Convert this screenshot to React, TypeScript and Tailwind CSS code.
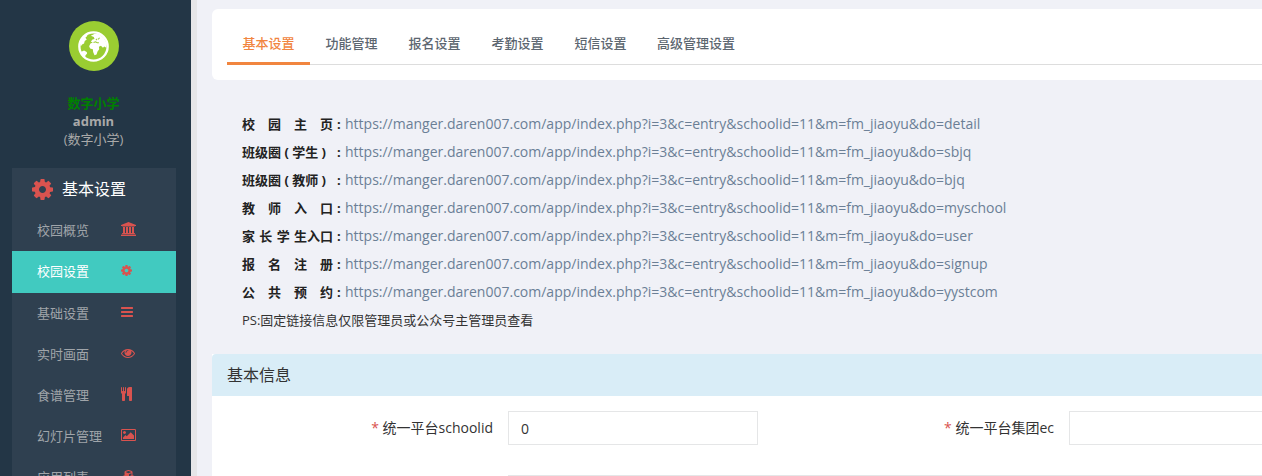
import React from "react";
import { FaCubes } from "react-icons/fa";

type GlyphProps = { box: string; d: string; className: string };

function Glyph({ box, d, className }: GlyphProps) {
  return (
    <svg viewBox={box} className={className} fill="currentColor" aria-hidden="true">
      <path d={d} />
    </svg>
  );
}

function Globe() {
  return (
    <svg viewBox="0 0 92 92" className="size-[31px]" aria-hidden="true">
      <circle cx="46" cy="46" r="42" fill="none" stroke="currentColor" strokeWidth="7" />
      <g fill="currentColor">
        <path d="M6 34 L12 20 L24 10 L28 14 L22 20 L26 25 L20 30 L18 37 L12 40 L8 46 Z" />
        <path d="M8 62 L18 58 L26 62 L27 67 L22 73 L21 80 L12 72 Z" />
        <path d="M38 14 L50 8 L64 10 L78 22 L86 38 L84 50 L78 46 L74 50 L68 44 L62 47 L63 54 L58 61 L55 70 L49 72 L45 62 L44 54 L36 52 L33 45 L37 37 L44 34 L38 31 L43 25 L49 24 L47 18 Z" />
      </g>
      <path
        d="M46 34 L52 32 L57 35 L62 35 M60 25 L64 20 M53 27 L57 23"
        fill="none"
        stroke="#9acd32"
        strokeWidth="3"
      />
    </svg>
  );
}

const COG =
  "M1152 896q0-106-75-181t-181-75-181 75-75 181 75 181 181 75 181-75 75-181zm512-109v222q0 12-8 23t-20 13l-185 28q-19 54-39 91 35 50 107 138 10 12 10 25t-9 23q-27 37-99 108t-94 71q-12 0-26-9l-138-108q-44 23-91 38-16 136-29 186-7 28-36 28h-222q-14 0-24.5-8.5t-11.5-21.5l-28-184q-49-16-90-37l-141 107q-10 9-25 9-14 0-25-11-126-114-165-168-7-10-7-23 0-12 8-23 15-21 51-66.5t54-70.5q-27-50-41-99l-183-27q-13-2-21-12.5t-8-23.5v-222q0-12 8-23t19-13l186-28q14-46 39-92-40-57-107-138-10-12-10-24 0-10 9-23 26-36 98.5-107.5t94.5-71.5q13 0 26 10l138 107q44-23 91-38 16-136 29-186 7-28 36-28h222q14 0 24.5 8.5t11.5 21.5l28 184q49 16 90 37l142-107q9-9 24-9 13 0 25 10 129 119 165 170 7 8 7 22 0 12-8 23-15 21-51 66.5t-54 70.5q26 50 41 98l183 28q13 2 21 12.5t8 23.5z";
const BANK =
  "M960 0l960 384v128h-128q0 26-20.5 45t-48.5 19h-1526q-28 0-48.5-19t-20.5-45h-128v-128zm-704 640h256v768h128v-768h256v768h128v-768h256v768h128v-768h256v768h59q28 0 48.5 19t20.5 45v64h-1664v-64q0-26 20.5-45t48.5-19h59v-768zm1595 960q28 0 48.5 19t20.5 45v128h-1920v-128q0-26 20.5-45t48.5-19h1782z";
const BARS =
  "M1536 1344v128q0 26-19 45t-45 19h-1408q-26 0-45-19t-19-45v-128q0-26 19-45t45-19h1408q26 0 45 19t19 45zm0-512v128q0 26-19 45t-45 19h-1408q-26 0-45-19t-19-45v-128q0-26 19-45t45-19h1408q26 0 45 19t19 45zm0-512v128q0 26-19 45t-45 19h-1408q-26 0-45-19t-19-45v-128q0-26 19-45t45-19h1408q26 0 45 19t19 45z";
const EYE =
  "M1664 960q-152-236-381-353 61 104 61 225 0 185-131.5 316.5t-316.5 131.5-316.5-131.5-131.5-316.5q0-121 61-225-229 117-381 353 133 205 333.5 326.5t434.5 121.5 434.5-121.5 333.5-326.5zm-720-384q0-20-14-34t-34-14q-125 0-214.5 89.5t-89.5 214.5q0 20 14 34t34 14 34-14 14-34q0-86 61-147t147-61q20 0 34-14t14-34zm848 384q0 34-20 69-140 230-376.5 368.5t-499.5 138.5-499.5-139-376.5-368q-20-35-20-69t20-69q140-229 376.5-368t499.5-139 499.5 139 376.5 368q20 35 20 69z";
const CUTLERY =
  "M832 64v640q0 61-35.5 111t-92.5 70v779q0 52-38 90t-90 38h-128q-52 0-90-38t-38-90v-779q-57-20-92.5-70t-35.5-111v-640q0-26 19-45t45-19 45 19 19 45v416q0 26 19 45t45 19 45-19 19-45v-416q0-26 19-45t45-19 45 19 19 45v416q0 26 19 45t45 19 45-19 19-45v-416q0-26 19-45t45-19 45 19 19 45zm768 0v1600q0 52-38 90t-90 38h-128q-52 0-90-38t-38-90v-512h-224q-13 0-22.5-9.5t-9.5-22.5v-800q0-132 94-226t226-94h256q26 0 45 19t19 45z";
const PICTURE =
  "M640 576q0 80-56 136t-136 56-136-56-56-136 56-136 136-56 136 56 56 136zm1024 384v448h-1408v-192l320-320 160 160 512-512zm96-704h-1600q-13 0-22.5 9.5t-9.5 22.5v1216q0 13 9.5 22.5t22.5 9.5h1600q13 0 22.5-9.5t9.5-22.5v-1216q0-13-9.5-22.5t-22.5-9.5zm160 32v1216q0 66-47 113t-113 47h-1600q-66 0-113-47t-47-113v-1216q0-66 47-113t113-47h1600q66 0 113 47t47 113z";

const menu: { text: string; icon: React.ReactNode; active?: boolean }[] = [
  { text: "校园概览", icon: <Glyph box="0 0 1920 1792" d={BANK} className="h-[14px] w-[15px]" /> },
  { text: "校园设置", icon: <Glyph box="128 128 1536 1536" d={COG} className="h-[11px] w-[11px]" />, active: true },
  { text: "基础设置", icon: <Glyph box="0 128 1536 1536" d={BARS} className="h-[12px] w-[12px]" /> },
  { text: "实时画面", icon: <Glyph box="0 0 1792 1792" d={EYE} className="h-[14px] w-[14px]" /> },
  { text: "食谱管理", icon: <Glyph box="192 0 1408 1792" d={CUTLERY} className="h-[14px] w-[11px]" /> },
  { text: "幻灯片管理", icon: <Glyph box="0 128 1920 1536" d={PICTURE} className="h-[12px] w-[15px]" /> },
  { text: "应用列表", icon: <FaCubes className="h-[15px] w-[15px]" aria-hidden="true" /> },
];

const tabs = ["基本设置", "功能管理", "报名设置", "考勤设置", "短信设置", "高级管理设置"];

const BASE = "https://manger.daren007.com/app/index.php?i=3&c=entry&schoolid=11&m=fm_jiaoyu&do=";

const links: { label: string[]; page: string }[] = [
  { label: ["校", "园", "主", "页"], page: "detail" },
  { label: ["班级圈 ( 学生 )"], page: "sbjq" },
  { label: ["班级圈 ( 教师 )"], page: "bjq" },
  { label: ["教", "师", "入", "口"], page: "myschool" },
  { label: ["家", "长", "学", "生入口"], page: "user" },
  { label: ["报", "名", "注", "册"], page: "signup" },
  { label: ["公", "共", "预", "约"], page: "yystcom" },
];

function Sidebar() {
  return (
    <aside className="w-[197px] shrink-0 overflow-hidden border-r-[6px] border-[#e6e6e8] bg-[#233646] px-3 text-[13px]">
      <div className="flex flex-col items-center pt-[21px] pr-1 leading-[18px] text-[#a9a9a9]">
        <div className="mb-[23px] flex size-[50px] items-center justify-center rounded-full bg-[#9acd32] text-white">
          <Globe />
        </div>
        <strong className="font-bold text-[#008000]">数字小学</strong>
        <strong className="font-bold">admin</strong>
        <span>(数字小学)</span>
      </div>
      <nav className="mt-5 mr-[3px] bg-[#2f4050]">
        <h2 className="flex h-[42px] items-center gap-[9px] pl-5 text-base text-white">
          <Glyph box="128 128 1536 1536" d={COG} className="size-[21px] text-[#d9534f]" />
          基本设置
        </h2>
        <ul>
          {menu.map((item) => (
            <li key={item.text}>
              <a
                href="#"
                className={
                  item.active
                    ? "flex h-[42px] items-center bg-[#41cac0] pl-[25px] text-white"
                    : "flex h-[41px] items-center pl-[25px] text-[#a0a5aa]"
                }
              >
                <span className="w-[84px]">{item.text}</span>
                <span className="pb-[3px] text-[#d9534f]">{item.icon}</span>
              </a>
            </li>
          ))}
        </ul>
      </nav>
    </aside>
  );
}

function Label({ htmlFor, children }: { htmlFor: string; children: React.ReactNode }) {
  return (
    <label htmlFor={htmlFor} className="text-right text-sm text-[#333]">
      <span className="text-[#d9534f]">*</span> {children}
    </label>
  );
}

export default function App() {
  return (
    <div className="flex h-screen overflow-hidden bg-[#f0f1f7] font-['Open_Sans','Noto_Sans_CJK_SC',sans-serif] text-[13px] text-[#333]">
      <Sidebar />
      <main className="min-w-0 flex-1 overflow-hidden pt-[9px] pl-[15px]">
        <div className="rounded-l-md bg-white pt-3 pb-[15px] pl-[15px]">
          <div className="flex h-11 border-b border-[#ddd]" role="tablist">
            {tabs.map((tab, i) => (
              <button
                key={tab}
                type="button"
                role="tab"
                aria-selected={i === 0}
                className={
                  i === 0
                    ? "-mb-px min-w-[83px] shrink-0 border-b-3 border-[#f1853f] px-[15px] pt-1 font-medium text-[#f1853f]"
                    : "-mb-px min-w-[83px] shrink-0 border-b-3 border-transparent px-[15px] pt-1 font-medium text-[#5c6670]"
                }
              >
                {tab}
              </button>
            ))}
          </div>
        </div>

        <section className="pt-[30px] pb-5 pl-[30px] leading-7">
          {links.map((link) => (
            <div key={link.page} className="flex whitespace-nowrap">
              <strong className="flex w-[103px] gap-1 font-bold text-[#222]">
                <span className="flex w-[91px] justify-between">
                  {link.label.map((part) => (
                    <span key={part}>{part}</span>
                  ))}
                </span>
                <span>:</span>
              </strong>
              <a href={BASE + link.page} className="text-sm leading-7 text-[#6b7f96]">
                {BASE + link.page}
              </a>
            </div>
          ))}
          <p>PS:固定链接信息仅限管理员或公众号主管理员查看</p>
        </section>

        <section className="bg-white">
          <h3 className="flex h-[42px] items-center rounded-tl bg-[#d9edf7] pl-[15px] text-base">基本信息</h3>
          <form className="grid grid-cols-[281px_280px_281px_minmax(0,1fr)] items-center gap-y-[30px] pt-[15px]">
            <Label htmlFor="schoolid">统一平台schoolid</Label>
            <div className="px-[15px]">
              <input id="schoolid" defaultValue="0" className="block h-[34px] w-full border border-[#e5e6e7] bg-white px-3 text-sm" />
            </div>
            <Label htmlFor="ec">统一平台集团ec</Label>
            <div className="pl-[15px]">
              <input id="ec" className="block h-[34px] w-full border border-r-0 border-[#e5e6e7] bg-white px-3 text-sm" />
            </div>
            <div className="col-span-3 col-start-2 pl-[15px]">
              <input aria-label="学校名称" className="block h-[34px] w-full border border-r-0 border-[#e5e6e7] bg-white px-3 text-sm" />
            </div>
          </form>
        </section>
      </main>
    </div>
  );
}
